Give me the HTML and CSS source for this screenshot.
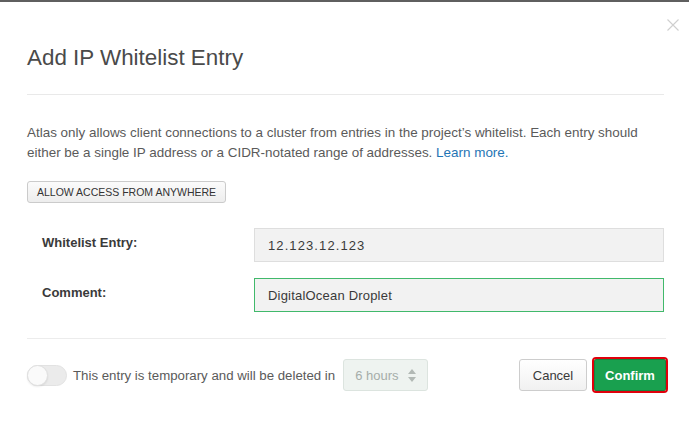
FILE: index.html
```html
<!DOCTYPE html>
<html lang="en">
<head>
<meta charset="utf-8">
<title>Add IP Whitelist Entry</title>
<link rel="stylesheet" href="styles.css">
</head>
<body>
<div class="modal">
  <button class="close" aria-label="Close">
    <svg width="12" height="12" viewBox="0 0 12 12"><path d="M0.5 0.5L11.5 11.5M11.5 0.5L0.5 11.5" stroke="#cfcfcf" stroke-width="1.1" fill="none"/></svg>
  </button>
  <header class="modal-header">
    <h1 class="title">Add IP Whitelist Entry</h1>
  </header>
  <div class="modal-body">
    <p class="intro">Atlas only allows client connections to a cluster from entries in the project’s whitelist. Each entry should either be a single IP address or a CIDR-notated range of addresses. <a class="link" href="#">Learn more.</a></p>
    <button class="btn-allow">ALLOW ACCESS FROM ANYWHERE</button>
    <div class="form">
      <div class="row">
        <label class="label">Whitelist Entry:</label>
        <div class="input input-ip">12.123.12.123</div>
      </div>
      <div class="row">
        <label class="label">Comment:</label>
        <div class="input input-focus">DigitalOcean Droplet</div>
      </div>
    </div>
  </div>
  <footer class="modal-footer">
    <span class="toggle"><span class="knob"></span></span>
    <span class="temp-text">This entry is temporary and will be deleted in</span>
    <span class="select">
      <span class="select-value">6 hours</span>
      <svg class="arrows" width="8" height="13" viewBox="0 0 8 13"><path d="M4 0L8 5H0Z M4 13L8 8H0Z" fill="#b2b9b5"/></svg>
    </span>
    <span class="spacer"></span>
    <button class="btn btn-cancel">Cancel</button>
    <button class="btn btn-confirm">Confirm</button>
  </footer>
</div>
</body>
</html>
```
FILE: styles.css
```css
* { box-sizing: border-box; }
html, body { margin: 0; padding: 0; background: #fff; }
body { font-family: "Liberation Sans", Arial, sans-serif; }

.modal {
  position: relative;
  border-top: 2px solid #5f5f5f;
  padding: 0 25px 0 27px;
  height: 423px;
}

.close {
  position: absolute;
  top: 17px;
  right: 10px;
  border: 0;
  background: none;
  padding: 0;
  width: 12px;
  height: 12px;
  line-height: 0;
}

.modal-header {
  padding-top: 43px;
  padding-bottom: 23px;
  border-bottom: 1px solid #e9e9e9;
}

.title {
  margin: 0;
  font-size: 22.4px;
  line-height: 26px;
  font-weight: normal;
  color: #4a4a4a;
}

.modal-body { padding-top: 28px; }

.intro {
  margin: 0;
  font-size: 13.45px;
  line-height: 20px;
  color: #5a5a5a;
}

.link { color: #1f75b5; text-decoration: none; }

.btn-allow {
  display: block;
  margin-top: 18px;
  height: 22px;
  padding: 0 9px;
  font-family: inherit;
  font-size: 10.5px;
  color: #333;
  border: 1px solid #cbcbcb;
  border-radius: 3px;
  background: linear-gradient(#fbfbfb, #ededed);
}

.form {
  margin-top: 25px;
  padding-left: 15px;
  display: flex;
  flex-direction: column;
  gap: 16px;
}

.row {
  display: grid;
  grid-template-columns: 212px 1fr;
}

.label {
  padding-top: 7px;
  font-size: 13px;
  line-height: 16px;
  font-weight: bold;
  color: #3a3a3a;
}

.input {
  height: 34px;
  display: flex;
  align-items: center;
  padding: 0 13px;
  font-size: 13px;
  letter-spacing: 0.2px;
  color: #3a3a3a;
  background: #f2f2f2;
  border: 1px solid #dedede;
}

.input-ip { letter-spacing: 1.1px; }

.input-focus { border-color: #41b96b; }

.modal-footer {
  margin-top: 26px;
  border-top: 1px solid #ececec;
  padding-top: 20px;
  display: flex;
  align-items: center;
  margin-right: -2px;
}

.toggle {
  position: relative;
  width: 40px;
  height: 21px;
  border-radius: 11px;
  background: #ebebeb;
  border: 1px solid #e2e2e2;
  flex: none;
}

.knob {
  position: absolute;
  left: -1px;
  top: -1px;
  width: 21px;
  height: 21px;
  border-radius: 50%;
  background: #fafafa;
  border: 1px solid #e0e0e0;
  box-shadow: 0 1px 2px rgba(0,0,0,0.08);
}

.temp-text {
  margin-left: 6px;
  font-size: 13.25px;
  color: #5a5a5a;
}

.select {
  margin-left: 8px;
  width: 85px;
  height: 32px;
  display: flex;
  align-items: center;
  justify-content: space-between;
  padding: 0 11px 0 11px;
  background: #eef3f0;
  border: 1px solid #dce4df;
  border-radius: 3px;
  font-size: 13px;
  color: #a5ada9;
}

.spacer { flex: 1; }

.btn {
  height: 32px;
  font-family: inherit;
  font-size: 13px;
  border-radius: 3px;
  padding: 0;
}

.btn-cancel {
  width: 68px;
  color: #3a3a3a;
  border: 1px solid #cdcdcd;
  background: linear-gradient(#ffffff, #f1f1f1);
}

.btn-confirm {
  width: 72px;
  margin-left: 7px;
  color: #fff;
  font-weight: bold;
  background: #19a04f;
  border: 1px solid #14863f;
  border-radius: 2px;
  outline: 2px solid #e0000b;
}
```
